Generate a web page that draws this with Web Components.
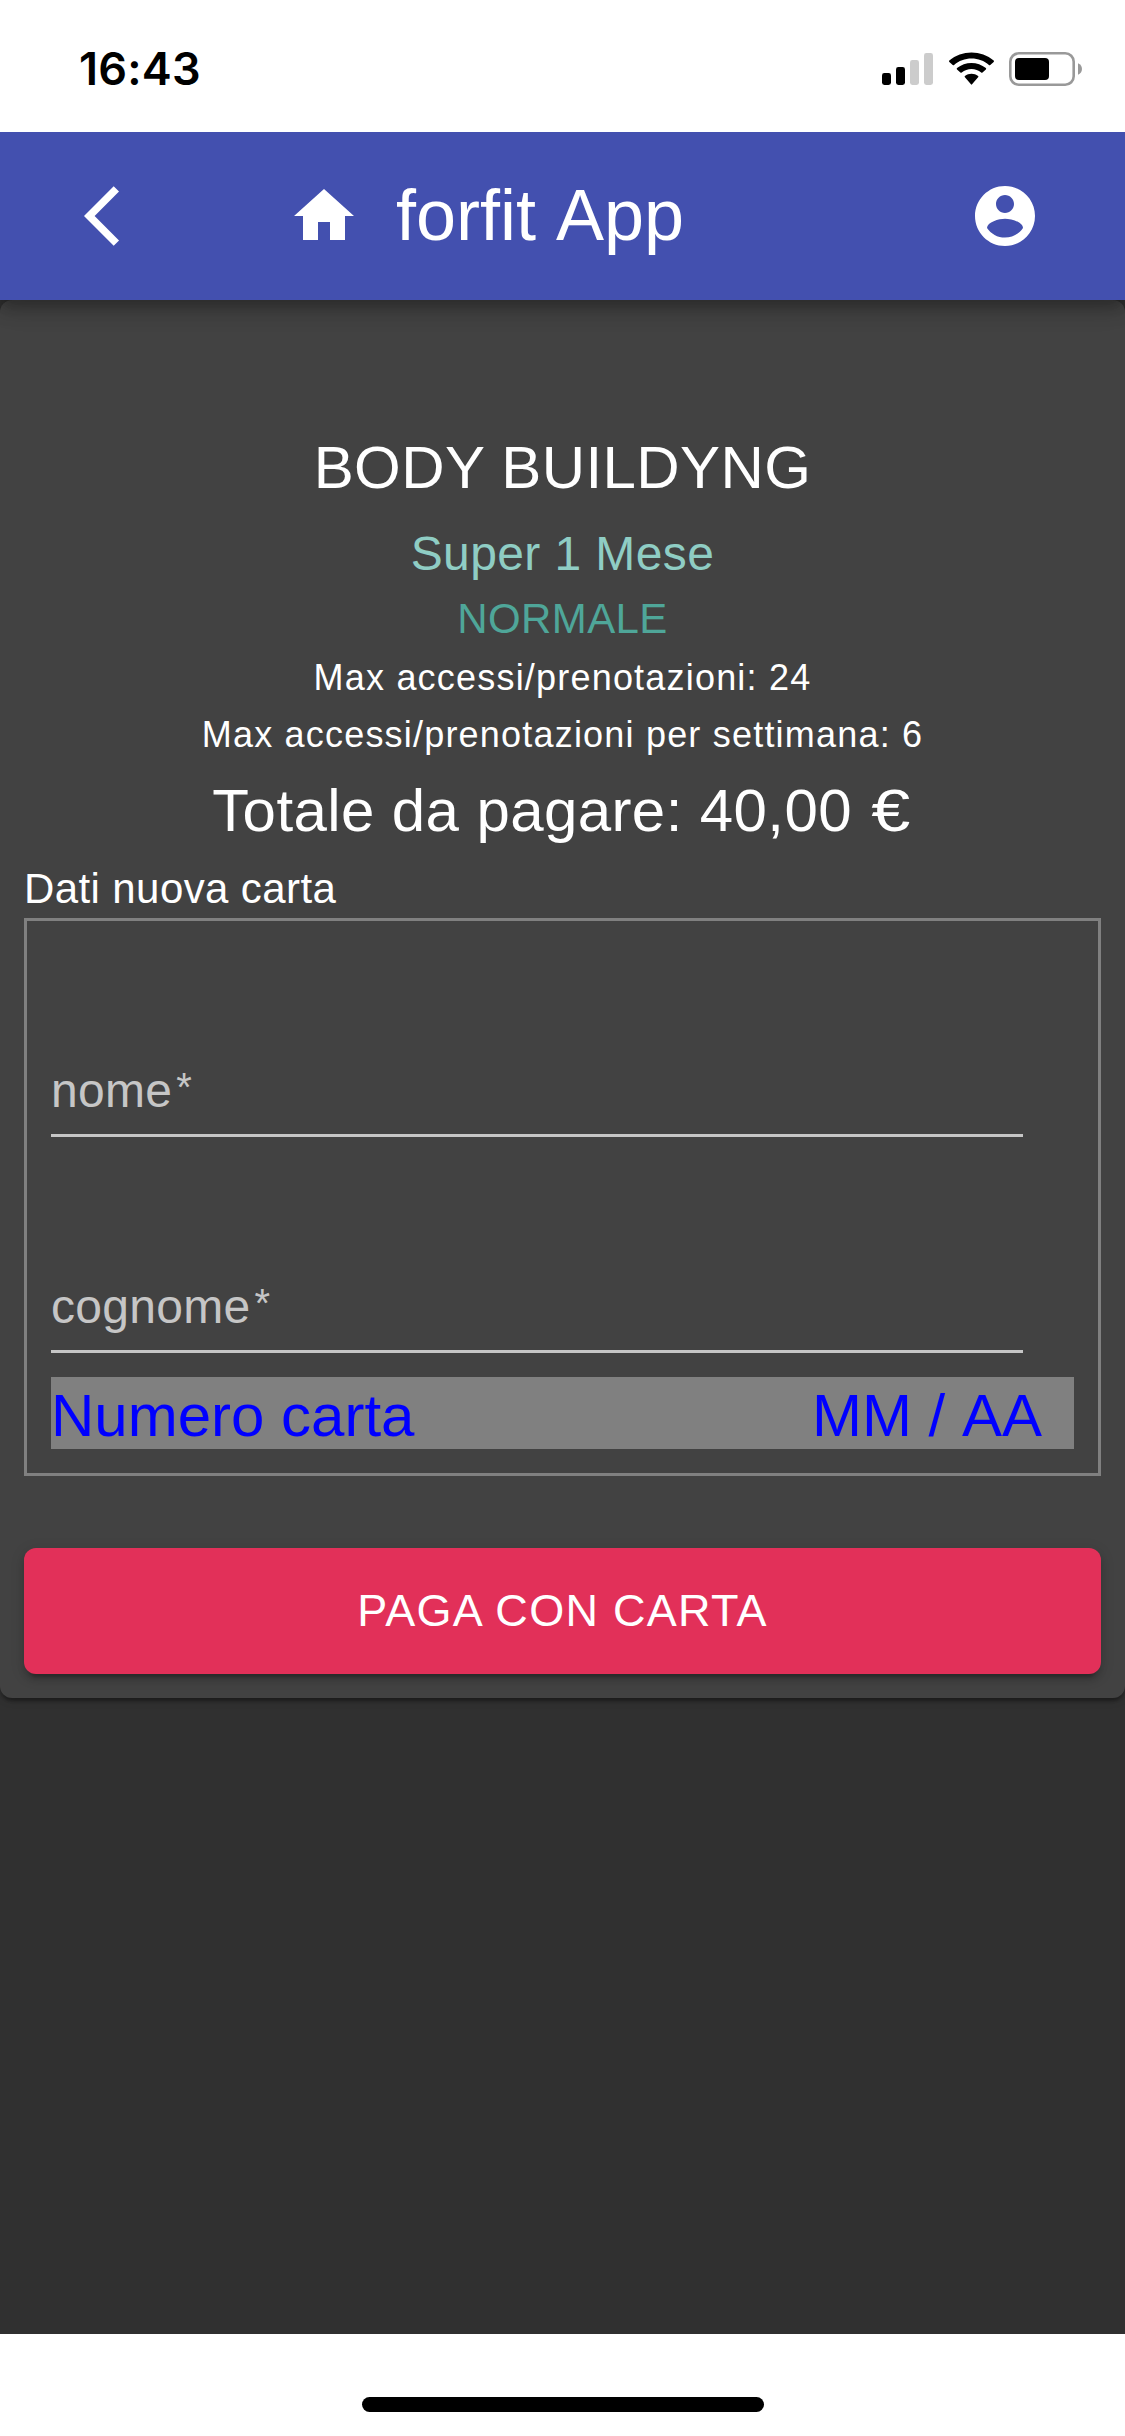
<!DOCTYPE html>
<html lang="it">
<head>
<meta charset="utf-8">
<title>forfit App</title>
<style>
html,body{margin:0;padding:0;width:1125px;height:2436px;overflow:hidden;background:#fff}
body{font-family:"Liberation Sans",Helvetica,Arial,sans-serif;color:#fff}
.euro{display:inline-block;transform:scaleX(1.17);margin:0 5px 0 5px}
</style>
</head>
<body>
<phone-screen>
  <status-bar slot="status" time="16:43"></status-bar>
  <app-header slot="header">forfit App</app-header>
  <payment-card>
    <text-line variant="h6">BODY BUILDYNG</text-line>
    <text-line variant="body1">Super 1 Mese</text-line>
    <text-line variant="body2">NORMALE</text-line>
    <text-line variant="caption">Max accessi/prenotazioni: 24</text-line>
    <text-line variant="caption">Max accessi/prenotazioni per settimana: 6</text-line>
    <text-line variant="h6">Totale da pagare: 40,00 <span class="euro">€</span></text-line>
    <text-line variant="label">Dati nuova carta</text-line>
    <card-box>
      <text-input>nome</text-input>
      <text-input>cognome</text-input>
      <card-number><span>Numero carta</span><span slot="expiry">MM / AA</span></card-number>
    </card-box>
    <pay-button>PAGA CON CARTA</pay-button>
  </payment-card>
  <home-indicator slot="footer"></home-indicator>
</phone-screen>
<script>
const define = (name, html) => customElements.define(name, class extends HTMLElement {
  constructor() {
    super();
    this.attachShadow({mode: 'open'}).innerHTML = html;
  }
  connectedCallback() {
    const t = this.shadowRoot.querySelector('[data-time]');
    if (t) t.textContent = this.getAttribute('time');
  }
});

define('phone-screen', `<style>
:host{display:flex;flex-direction:column;width:1125px;height:2436px;background:#fff}
main{flex:1;background:#303030}
</style><slot name="status"></slot><slot name="header"></slot><main><slot></slot></main><slot name="footer"></slot>`);

define('status-bar', `<style>
:host{display:flex;justify-content:space-between;align-items:flex-start;box-sizing:border-box;height:132px;padding:0 41px 0 79px;background:#fff;color:#000;position:relative;z-index:2}
.time{font:600 45px/54px Inter,sans-serif;padding-top:42px;letter-spacing:.2px}
.icons{display:flex;gap:15px;padding-top:52px}
svg{display:block}
</style><div class="time" data-time></div>
<div class="icons">
<svg width="52" height="34" viewBox="0 0 52 34"><rect x="0" y="21" width="9" height="12" rx="2.4"/><rect x="14" y="15" width="9" height="18" rx="2.4"/><g fill="#ccc"><rect x="28" y="8" width="9" height="25" rx="2.4"/><rect x="42" y="1" width="9" height="32" rx="2.4"/></g></svg>
<svg width="45" height="34" viewBox="2 0 41 34" preserveAspectRatio="none"><path d="M22.5 6.6c6 0 11.600 2.300 15.900 6.400.3.300.8.300 1.200 0l3.100-3.100c.4-.4.4-.9 0-1.300C31.500-2.300 13.500-2.300 2.300 8.600c-.4.4-.4.9 0 1.300l3.100 3.100c.4.300.9.300 1.200 0C10.900 8.900 16.600 6.600 22.500 6.600z"/><path d="M22.500 17.100c3.300 0 6.400 1.200 8.800 3.400.4.300.9.300 1.200 0l3.100-3.100c.4-.4.4-.9 0-1.300-7.400-6.900-18.900-6.900-26.300 0-.4.400-.4.900 0 1.300l3.100 3.100c.3.300.8.300 1.200 0 2.500-2.200 5.600-3.400 8.900-3.400z"/><path d="M28.500 25.300c.4-.4.4-1 0-1.300-3.500-3-8.500-3-12 0-.4.300-.4.900 0 1.300l5.500 7c.3.500.7.500 1 0z"/></svg>
<svg width="75" height="34" viewBox="0 0 75 34"><rect x="1.300" y="1.300" width="63.400" height="31.400" rx="8.500" fill="none" stroke="#999" stroke-width="2.600"/><rect x="6" y="6" width="34" height="22" rx="4"/><path fill="#999" d="M69 11.200c2.500 1 4 3.300 4 5.800s-1.500 4.800-4 5.800z"/></svg>
</div>`);

define('app-header', `<style>
:host{display:flex;align-items:center;box-sizing:border-box;height:168px;padding:0 84px;background:#4350af;color:#fff;position:relative;z-index:1;
box-shadow:0 6px 12px -3px rgba(0,0,0,.2),0 12px 15px rgba(0,0,0,.14),0 3px 30px rgba(0,0,0,.12)}
svg{display:block;width:72px;height:72px;fill:#fff}
.home{margin-left:132px}
h1{flex:1;margin:0 0 2px 36px;font-size:72px;font-weight:400;line-height:96px;font-kerning:none}
</style>
<svg viewBox="0 0 24 24"><path d="M11.670 3.870L9.900 2.100 0 12l9.900 9.900 1.770-1.770L3.540 12z"/></svg>
<svg class="home" viewBox="0 0 24 24"><path d="M10 20v-6h4v6h5v-8h3L12 3 2 12h3v8z"/></svg>
<h1><slot></slot></h1>
<svg viewBox="0 0 24 24"><path d="M12 2C6.480 2 2 6.480 2 12s4.480 10 10 10 10-4.480 10-10S17.520 2 12 2zm0 3c1.660 0 3 1.340 3 3s-1.340 3-3 3-3-1.340-3-3 1.340-3 3-3zm0 14.200c-2.500 0-4.710-1.280-6-3.220.030-1.990 4-3.080 6-3.080 1.990 0 5.970 1.090 6 3.080-1.290 1.940-3.500 3.220-6 3.220z"/></svg>`);

define('payment-card', `<style>
:host{display:flex;flex-direction:column;box-sizing:border-box;height:1398px;padding:120px 24px 24px;background:#424242;border-radius:12px;
box-shadow:0 6px 3px -3px rgba(0,0,0,.2),0 3px 3px rgba(0,0,0,.14),0 3px 9px rgba(0,0,0,.12)}
</style><slot></slot>`);

define('text-line', `<style>
:host{display:block;text-align:center;white-space:nowrap}
:host([variant=h6]){font-size:60px;line-height:96px;height:96px;letter-spacing:.4px}
:host([variant=body1]){font-size:48px;line-height:76px;height:74px;letter-spacing:.4px;color:#8fcdc4}
:host([variant=body2]){font-size:42px;line-height:58px;margin-bottom:1px;letter-spacing:.4px;color:#4fa699}
:host([variant=caption]){font-size:36px;line-height:57px;letter-spacing:1.2px}
:host([variant=label]){font-size:42px;line-height:59px;letter-spacing:.4px;text-align:left}
</style><slot></slot>`);

define('card-box', `<style>
:host{display:flex;flex-direction:column;box-sizing:border-box;height:558px;border:3px solid #808080;padding:0 24px}
</style><slot></slot>`);

define('text-input', `<style>
:host{display:flex;align-items:flex-end;box-sizing:border-box;width:972px;height:216px;padding-bottom:19px;border-bottom:3px solid #c6c6c6;color:#c6c6c6;font-size:48px;line-height:48px;letter-spacing:.3px}
i{font-style:normal;font-size:40px;margin:0 0 4px 4px}
</style><slot></slot><i>*</i>`);

define('card-number', `<style>
:host{display:flex;justify-content:space-between;box-sizing:border-box;height:72px;margin-top:24px;padding-right:32px;background:#808080;color:#00f;font-size:60px;line-height:78px;white-space:nowrap;font-kerning:none}
</style><slot></slot><slot name="expiry"></slot>`);

define('pay-button', `<style>
:host{display:block;margin-top:auto}
button{display:block;width:100%;height:126px;border:0;border-radius:12px;padding:0;background:#e23059;color:#fff;font:400 45px/126px "Liberation Sans",Helvetica,Arial,sans-serif;letter-spacing:1.286px;
box-shadow:0 9px 3px -6px rgba(0,0,0,.2),0 6px 6px rgba(0,0,0,.14),0 3px 15px rgba(0,0,0,.12)}
</style><button><slot></slot></button>`);

define('home-indicator', `<style>
:host{display:flex;justify-content:center;align-items:flex-start;box-sizing:border-box;height:102px;padding-top:63px;background:#fff}
div{width:402px;height:15px;border-radius:8px;background:#000}
</style><div></div>`);
</script>
</body>
</html>
